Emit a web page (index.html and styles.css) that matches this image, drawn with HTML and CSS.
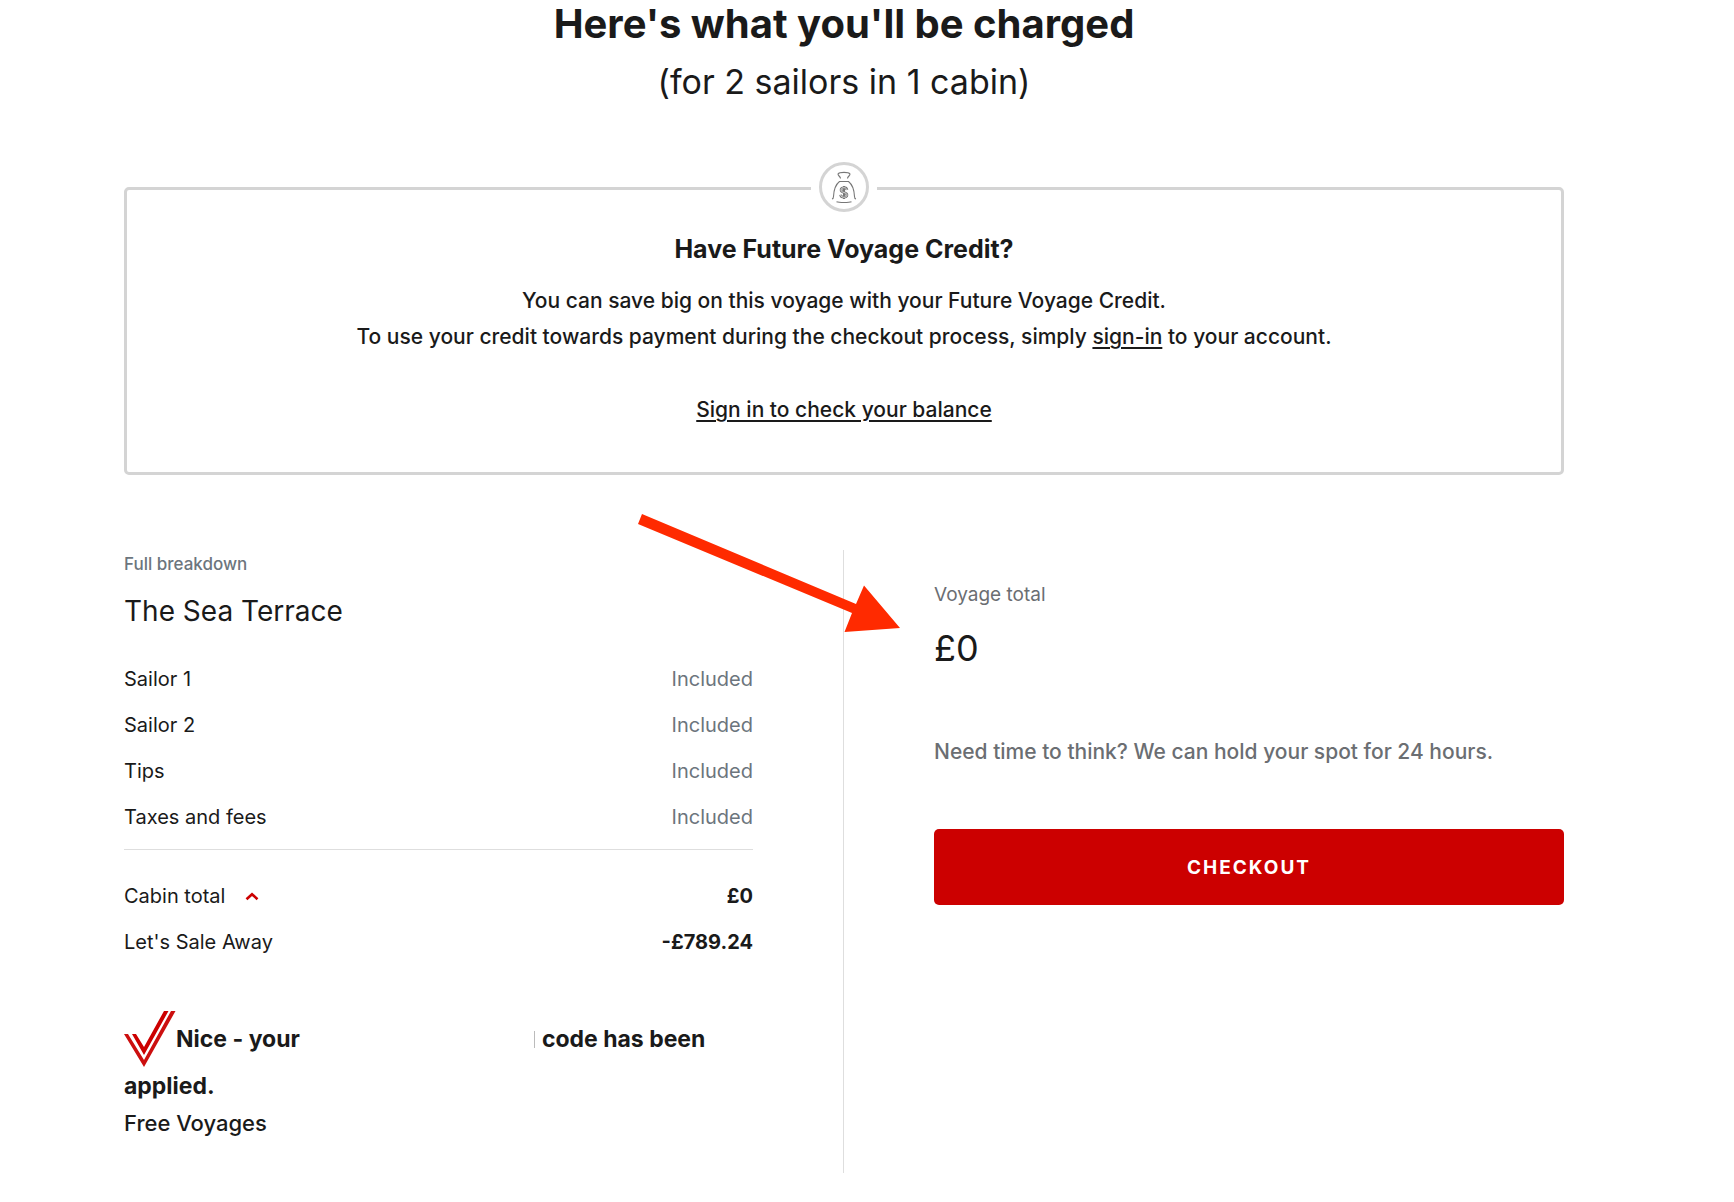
FILE: index.html
```
<!DOCTYPE html>
<html lang="en">
<head>
  <meta charset="UTF-8" />
  <meta name="viewport" content="width=device-width, initial-scale=1.0" />
  <title>Voyage Summary</title>
  <link rel="stylesheet" href="styles.css">
</head>
<body>

  <main class="page">
    <h1>Here's what you'll be charged</h1>
    <p class="subtitle">(for 2 sailors in 1 cabin)</p>

    <section class="credit-box">
      <div class="credit-badge">
        <svg width="50" height="50" viewBox="0 0 50 50" fill="none">
          <circle cx="25" cy="25" r="23.5" stroke="#d4d4d4" stroke-width="3" />
          <g stroke="#777" stroke-width="1.1">
            <path d="M21.5 16.5 C21.5 14.5 19 14 19 12 C20.5 9.8 29.5 9.8 31 12 C31 14 28.5 14.5 28.5 16.5" />
            <path d="M20.5 19.5 H29.5 M20.5 19.5 C16 23 14.8 28 14.5 34.5 C14.5 36 14 36.8 13 37 M29.5 19.5 C34 23 35.2 28 35.5 34.5 C35.5 36 36 36.8 37 37" />
            <path d="M17.5 39.8 C20 40.8 30 40.8 32.5 39.8" />
          </g>
          <g stroke="#777">
            <path d="M28 28 C27.5 24.8 22 25 22 28 C22 31 28 30 28 33 C28 36.2 22 36 21.5 32.8" stroke-width="2.6" />
            <path d="M25 24 V37" stroke-width="2" />
            <path d="M28 28 C27.5 24.8 22 25 22 28 C22 31 28 30 28 33 C28 36.2 22 36 21.5 32.8" stroke="#fff" stroke-width="0.7" />
          </g>
        </svg>
      </div>
      <h2>Have Future Voyage Credit?</h2>
      <p>You can save big on this voyage with your Future Voyage Credit.<br>
      To use your credit towards payment during the checkout process, simply <a href="#">sign-in</a> to your account.</p>
      <p class="balance"><a href="#">Sign in to check your balance</a></p>
    </section>

    <div class="summary">
      <section class="breakdown">
        <p class="label">Full breakdown</p>
        <h3>The Sea Terrace</h3>

        <table class="costs">
          <tr><th>Sailor 1</th><td>Included</td></tr>
          <tr><th>Sailor 2</th><td>Included</td></tr>
          <tr><th>Tips</th><td>Included</td></tr>
          <tr><th>Taxes and fees</th><td>Included</td></tr>
        </table>

        <hr>

        <table class="totals">
          <tr>
            <th>
              <div class="cabin">
                Cabin total
                <button type="button" class="toggle" aria-label="Hide breakdown">
                  <svg width="14" height="9" viewBox="0 0 14 9" fill="none" stroke="#cc0000" stroke-width="2.6">
                    <path d="M1.5 7.2 L7 2.2 L12.5 7.2" />
                  </svg>
                </button>
              </div>
            </th>
            <td>£0</td>
          </tr>
          <tr><th>Let's Sale Away</th><td>-£789.24</td></tr>
        </table>

        <div class="promo">
          <svg class="tick" width="52" height="56" viewBox="0 0 52 56">
            <path fill="#cc0000" d="M8 23 H12 L20 36 L40 0 H44.5 L20 44 Z" />
            <path fill="#cc0f0f" d="M0 23 H4 L20 49 L47 0 H51.5 L20 56 Z" />
          </svg>
          <strong>Nice - your</strong>
          <span class="code"></span>
          <strong>code has been</strong>
        </div>
        <p><strong>applied.</strong></p>
        <p class="promo-name">Free Voyages</p>
      </section>

      <section class="total">
        <p class="label">Voyage total</p>
        <p class="amount">£0</p>
        <p class="hold">Need time to think? We can hold your spot for 24 hours.</p>
        <button type="button" class="checkout">CHECKOUT</button>
      </section>

      <svg class="arrow" width="262" height="118" viewBox="0 0 262 118">
        <path fill="#ff2a00" d="M4 0 L218 90 L226 71.5 L262 114 L206.5 118 L214 99 L0 10 Z" />
      </svg>
    </div>
  </main>

</body>
</html>
```

FILE: styles.css
```
body {
  margin: 0;
  padding-right: 46px;
  background: #fff;
  color: #1a1a1a;
  font-family: Inter, "Liberation Sans", sans-serif;
  font-size: 21px;
  font-weight: 500;
  line-height: 36px;
}

h1, h2, h3, p {
  margin: 0;
}

a {
  color: inherit;
  text-decoration-thickness: 2px;
  text-underline-offset: 3px;
}

.page {
  max-width: 1440px;
  margin: 0 auto;
}

h1 {
  font-size: 40px;
  line-height: 48px;
  font-weight: 700;
  text-align: center;
}

.subtitle {
  margin-top: 10px;
  font-size: 34px;
  font-weight: 400;
  line-height: 48px;
  text-align: center;
}

/* Future voyage credit */
.credit-box {
  position: relative;
  margin-top: 81px;
  padding: 41px 20px 44px;
  border: 3px solid #d4d4d4;
  border-radius: 5px;
  text-align: center;
}

.credit-badge {
  position: absolute;
  top: -28px;
  left: 50%;
  width: 66px;
  height: 50px;
  margin-left: -33px;
  background: #fff;
}

.credit-badge svg {
  display: block;
  margin: 0 auto;
}

h2 {
  margin-bottom: 16px;
  font-size: 25px;
  line-height: 36px;
  font-weight: 700;
}

.balance {
  margin-top: 37px;
}

/* Two columns */
.summary {
  position: relative;
  display: grid;
  grid-template-columns: 1fr 1fr;
  margin-top: 75px;
}

.breakdown {
  padding: 0 90px 32px 0;
  border-right: 1px solid #dedede;
}

.label {
  font-size: 17px;
  line-height: 28px;
  color: #6c757d;
}

h3 {
  margin-top: 13px;
  font-size: 28px;
  line-height: 40px;
  font-weight: 400;
}

table {
  width: 100%;
  border-collapse: collapse;
  font-size: 20px;
  line-height: 28px;
}

th, td {
  padding: 9px 0;
  font-weight: 400;
  text-align: left;
}

td {
  text-align: right;
}

.costs {
  margin-top: 25px;
}

.costs td {
  color: #6c757d;
}

hr {
  margin: 9px 0 23px;
  border: none;
  border-top: 1px solid #dedede;
}

.totals td {
  font-weight: 700;
}

.cabin {
  display: flex;
  align-items: center;
  gap: 20px;
}

.toggle {
  display: flex;
  padding: 0;
  border: none;
  background: none;
  cursor: pointer;
}

.promo {
  display: flex;
  align-items: center;
  margin: 46px 0 1px;
}

strong {
  font-size: 23px;
  font-weight: 700;
}

.code {
  width: 234px;
  height: 17px;
  margin-right: 7px;
  border-right: 1px solid #bbb;
}

.promo-name {
  font-size: 22px;
}

.total {
  padding: 31px 0 0 90px;
}

.total .label {
  font-size: 19px;
  font-weight: 400;
  color: #6b6e72;
}

.amount {
  margin-top: 15px;
  font-size: 36px;
  font-weight: 400;
  line-height: 48px;
}

.hold {
  margin-top: 62px;
  color: #6b6e72;
}

.checkout {
  display: block;
  width: 100%;
  height: 76px;
  margin-top: 59px;
  border: none;
  border-radius: 5px;
  background: #cc0000;
  color: #fff;
  font-family: inherit;
  font-size: 19px;
  font-weight: 700;
  letter-spacing: 2px;
  cursor: pointer;
}

/* Pointer to the voyage total */
.arrow {
  position: absolute;
  top: -36px;
  left: 514px;
}

@media (max-width: 900px) {
  .summary {
    grid-template-columns: 1fr;
  }

  .breakdown {
    padding-right: 0;
    border-right: none;
  }

  .total {
    padding-left: 0;
  }

  .arrow {
    display: none;
  }
}
```
